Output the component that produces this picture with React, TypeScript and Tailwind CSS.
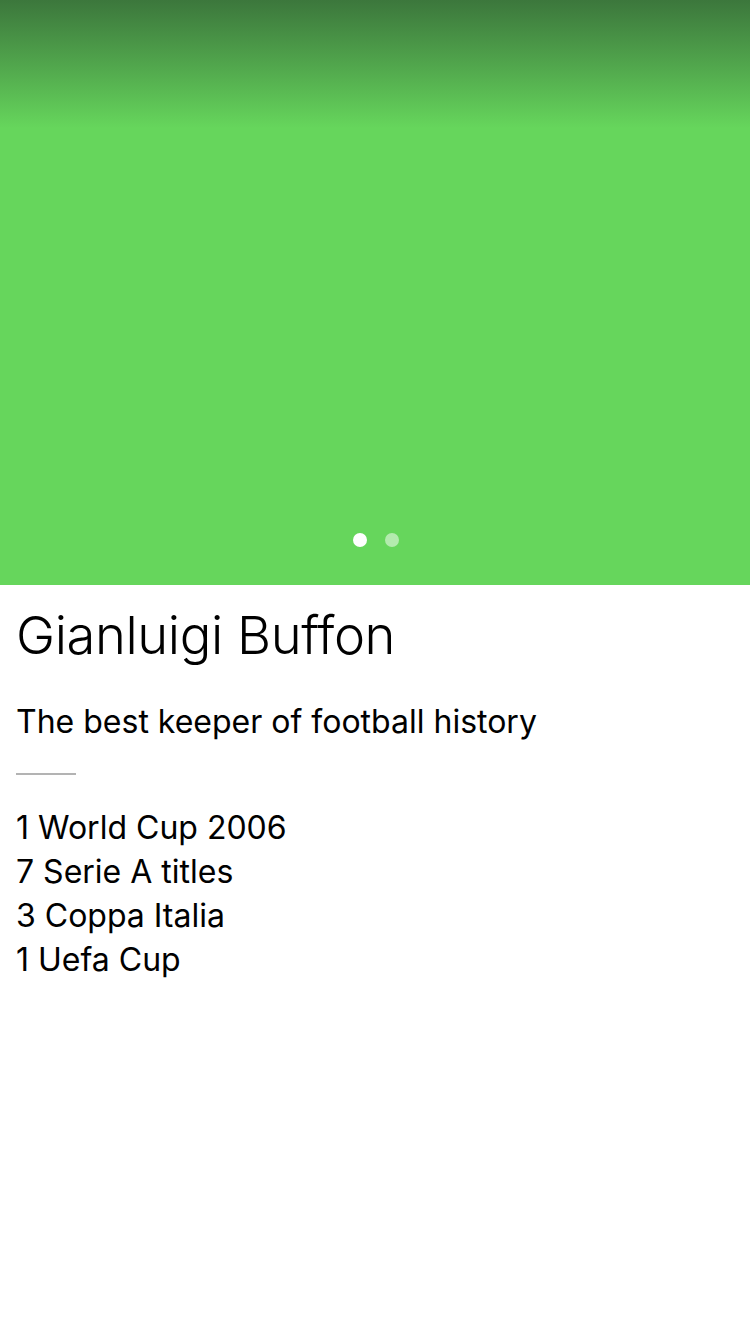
export default function App() {
  const titles = ["1 World Cup 2006", "7 Serie A titles", "3 Coppa Italia", "1 Uefa Cup"];

  return (
    <div className="flex min-h-[1334px] w-[750px] flex-col bg-white font-['Inter',sans-serif] text-black">
      {/* Hero slider */}
      <div className="flex h-[585px] flex-col justify-end bg-[#66d65c]">
        <div className="h-[128px] bg-gradient-to-b from-[#3c773c] to-[#66d65c] mb-auto" />
        <div className="flex justify-center gap-[18px] pb-[38px] pl-[2px]">
          <span className="h-[14px] w-[14px] rounded-full bg-white" />
          <span className="h-[14px] w-[14px] rounded-full bg-white/50" />
        </div>
      </div>

      {/* Player info */}
      <div className="flex flex-col px-4">
        <h1 className="mt-[17px] text-[52.5px] font-light leading-[66px] tracking-[-0.4px]">Gianluigi Buffon</h1>
        <p className="mt-[34px] text-[32px] leading-[40px]">The best keeper of football history</p>
        <div className="mt-[31px] h-[2px] w-[60px] bg-[#b3b3b3]" />
        <ul className="mt-[31px] text-[32px] leading-[44px]">
          {titles.map((t) => (
            <li key={t}>{t}</li>
          ))}
        </ul>
      </div>
    </div>
  );
}
